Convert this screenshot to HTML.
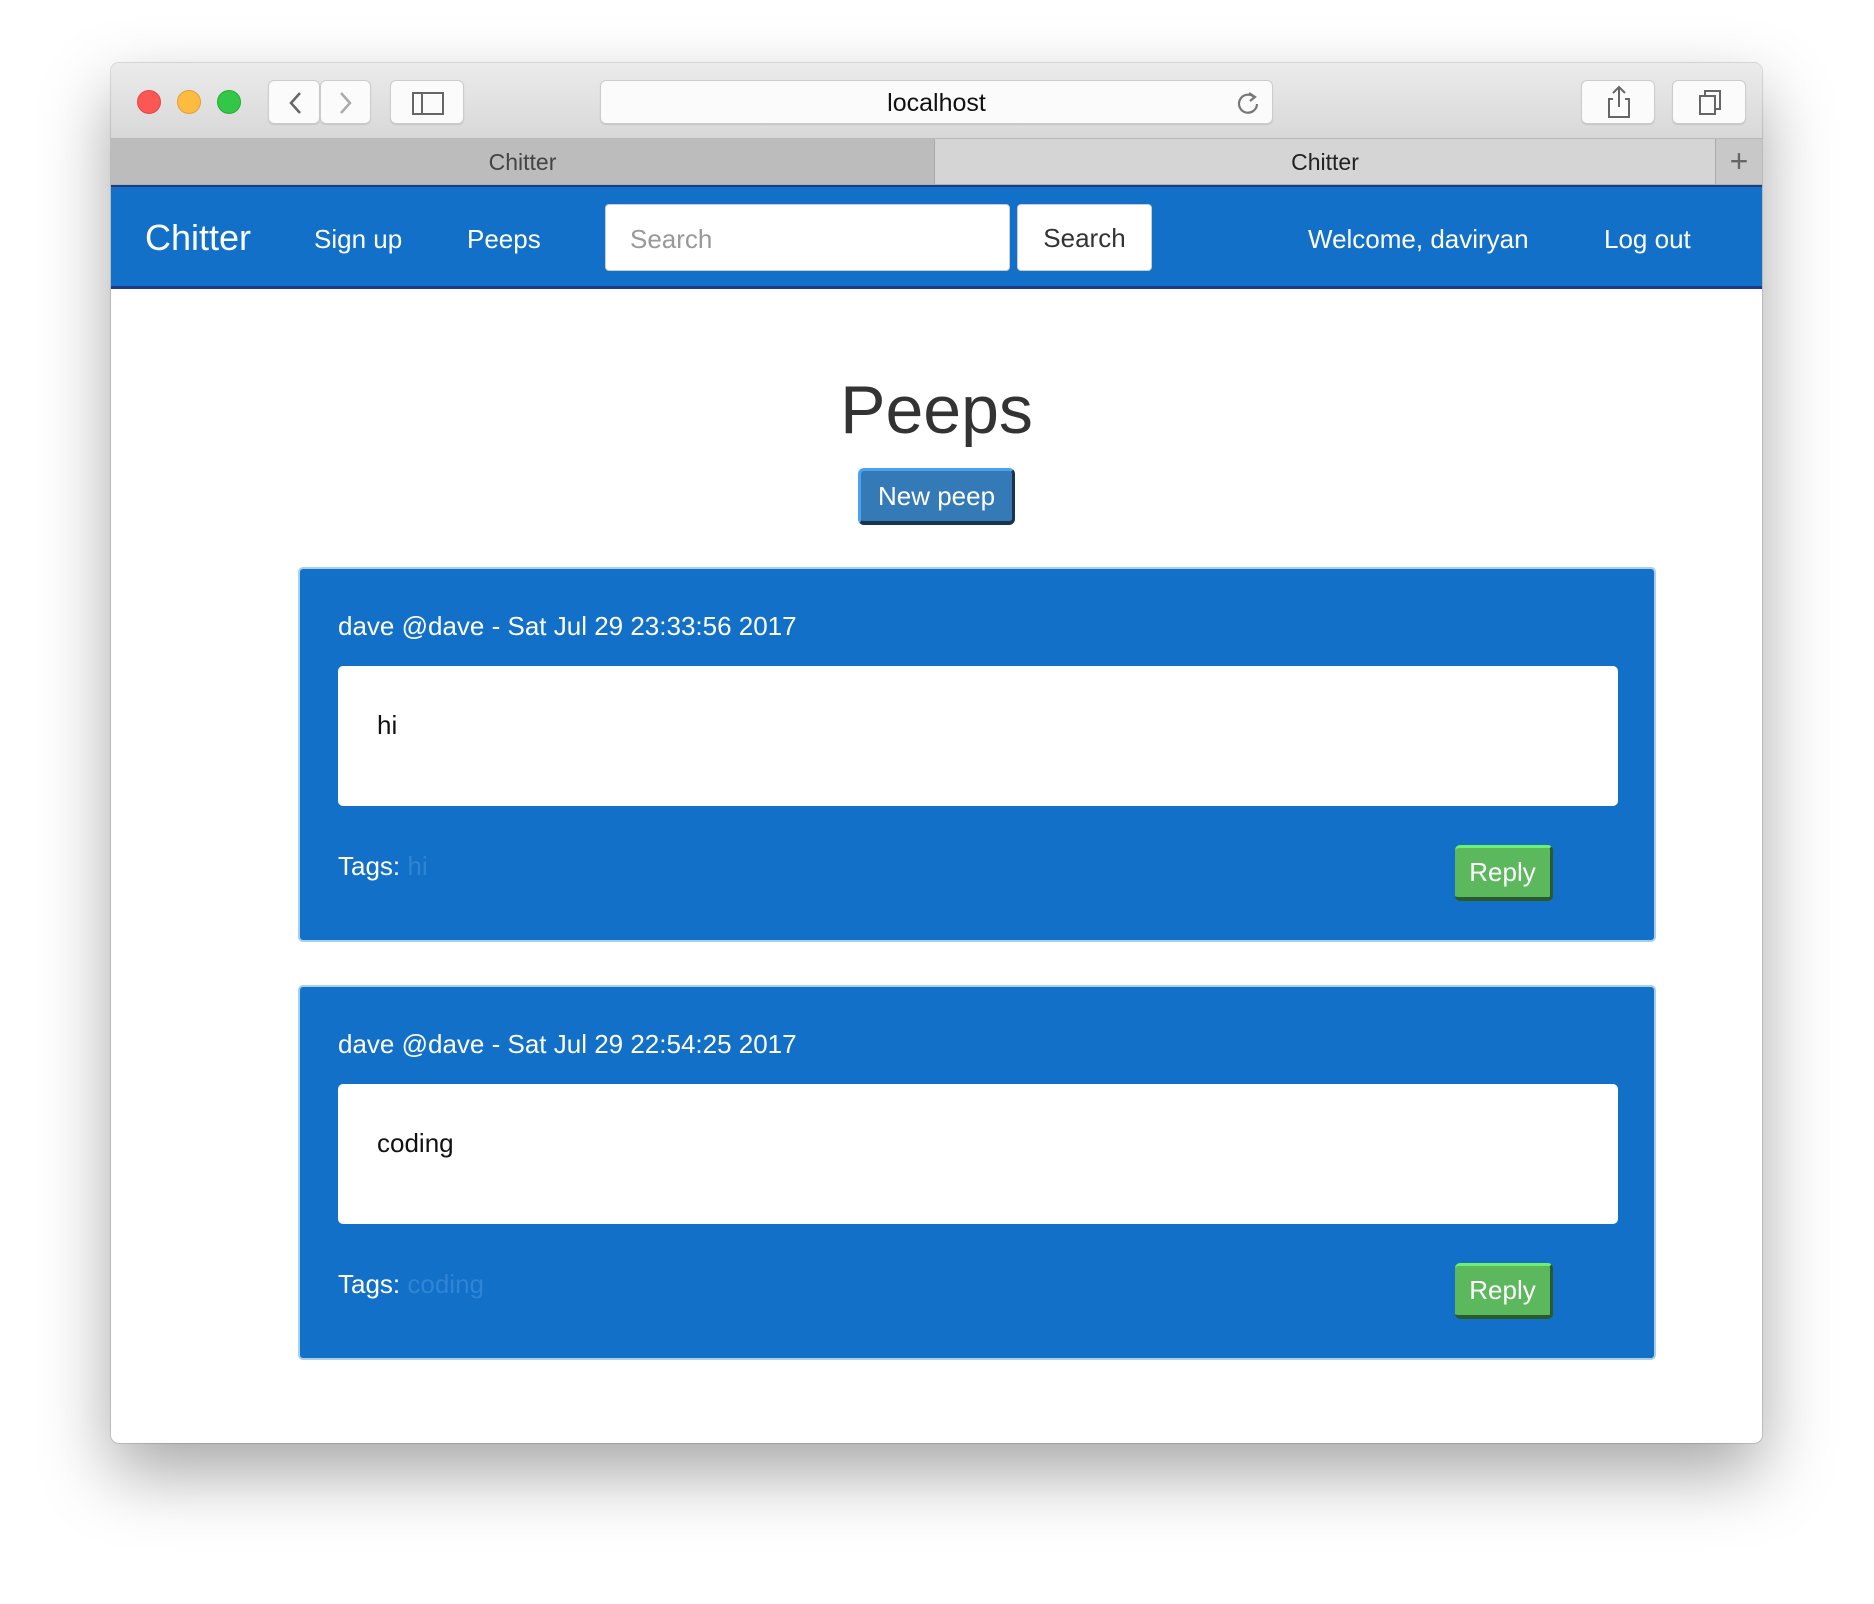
<!DOCTYPE html>
<html><head><style>
*{margin:0;padding:0;box-sizing:border-box}
body{width:1874px;height:1604px;background:#fff;font-family:"Liberation Sans",sans-serif;position:relative;overflow:hidden}
.win{position:absolute;left:111px;top:63px;width:1651px;height:1380px;background:#fff;border-radius:8px;box-shadow:0 30px 70px rgba(0,0,0,.35),0 0 0 1px rgba(0,0,0,.12);overflow:hidden}
.tb{position:absolute;left:0;top:0;width:100%;height:76px;background:linear-gradient(#ecebec,#d9d8d9);border-bottom:1px solid #b8b8b8}
.dot{position:absolute;top:27px;width:24px;height:24px;border-radius:50%}
.btn{position:absolute;top:17px;height:44px;background:#fbfbfb;border:1px solid #ccc;border-radius:6px;box-shadow:0 1px 1px rgba(0,0,0,.1)}
.tabs{position:absolute;left:0;top:76px;width:100%;height:46px;background:#d6d5d6;border-bottom:1px solid #b0b0b0}
.nav{position:absolute;left:0;top:122px;width:100%;height:104px;background:#1270c8;border-top:2px solid #1d3a8a;border-bottom:3px solid #1d3a8a;color:#fff;font-size:26px}
.nav span{position:absolute;top:37px}
.card{position:absolute;left:187px;width:1358px;height:375px;background:#1270c8;border:2px solid #a8d0e8;border-radius:5px;color:#fff;font-size:26px}
.card .h{position:absolute;left:38px;top:42px}
.card .box{position:absolute;left:38px;top:97px;width:1280px;height:140px;background:#fff;border-radius:5px;color:#111;padding:44px 0 0 39px}
.card .t{position:absolute;left:38px;top:282px}
.card .r{position:absolute;left:1155px;top:276px;width:98px;height:56px;background:#5cb85c;border-radius:5px;border-top:3px solid #6ef06e;border-bottom:4px solid #2a5a2a;border-right:3px solid #2a5a2a;text-align:center;line-height:48px}
</style></head><body>
<div class="win">
 <div class="tb">
  <div class="dot" style="left:26px;background:#fc5753;border:1px solid #df4744"></div>
  <div class="dot" style="left:66px;background:#fdbc40;border:1px solid #de9f34"></div>
  <div class="dot" style="left:106px;background:#33c748;border:1px solid #27aa35"></div>
  <div class="btn" style="left:157px;width:52px"><svg width="52" height="44"><path d="M31 12 L22 22 L31 32" fill="none" stroke="#666" stroke-width="2.5"/></svg></div>
  <div class="btn" style="left:209px;width:51px"><svg width="51" height="44"><path d="M20 12 L29 22 L20 32" fill="none" stroke="#aaa" stroke-width="2.5"/></svg></div>
  <div class="btn" style="left:279px;width:74px"><svg width="74" height="44"><rect x="22" y="12" width="30" height="21" fill="none" stroke="#666" stroke-width="2"/><line x1="31" y1="12" x2="31" y2="33" stroke="#666" stroke-width="2"/></svg></div>
  <div class="btn" style="left:489px;width:673px;text-align:center;font-size:25px;line-height:44px;color:#111">localhost<svg style="position:absolute;right:10px;top:8px" width="28" height="28"><path d="M20 8 A9 9 0 1 0 23 15" fill="none" stroke="#777" stroke-width="2.2"/><path d="M15 4 L21 8 L16 12" fill="none" stroke="#777" stroke-width="2.2"/></svg></div>
  <div class="btn" style="left:1470px;width:74px"><svg width="74" height="44"><path d="M31 18 H27 V36 H47 V18 H43 M37 26 V6 M31 12 L37 6 L43 12" fill="none" stroke="#666" stroke-width="2"/></svg></div>
  <div class="btn" style="left:1561px;width:74px"><svg width="74" height="44"><rect x="27" y="15" width="15" height="18" fill="none" stroke="#666" stroke-width="2"/><path d="M32 15 V10 H47 V28 H42" fill="none" stroke="#666" stroke-width="2"/></svg></div>
 </div>
 <div class="tabs">
  <div style="position:absolute;left:0;top:0;width:824px;height:45px;background:#bdbcbd;border-right:1px solid #a9a9a9;text-align:center;line-height:47px;font-size:23px;color:#444">Chitter</div>
  <div style="position:absolute;left:824px;top:0;width:780px;height:45px;text-align:center;line-height:47px;font-size:23px;color:#222">Chitter</div>
  <div style="position:absolute;left:1604px;top:0;width:47px;height:45px;border-left:1px solid #a9a9a9;background:#c9c8c9;text-align:center;line-height:44px;font-size:32px;color:#666">+</div>
 </div>
 <div class="nav">
  <span style="left:34px;top:30px;font-size:36px">Chitter</span>
  <span style="left:203px">Sign up</span>
  <span style="left:356px">Peeps</span>
  <div style="position:absolute;left:494px;top:17px;width:405px;height:67px;background:#fff;border:1px solid #ccc;border-radius:4px;color:#999;padding:19px 0 0 24px">Search</div>
  <div style="position:absolute;left:906px;top:17px;width:135px;height:67px;background:#fff;border:1px solid #ccc;border-radius:4px;color:#333;text-align:center;line-height:66px">Search</div>
  <span style="left:1197px">Welcome, daviryan</span>
  <span style="left:1493px">Log out</span>
 </div>
 <div style="position:absolute;left:0;top:308px;width:100%;text-align:center;font-size:68px;color:#333">Peeps</div>
 <div style="position:absolute;left:747px;top:405px;width:157px;height:57px;background:#337ab7;border-radius:6px;border-top:3px solid #4aa3ee;border-left:3px solid #4aa3ee;border-bottom:4px solid #1a3450;border-right:3px solid #1a3450;color:#fff;font-size:26px;text-align:center;line-height:50px">New peep</div>
 <div class="card" style="top:504px"><div class="h">dave @dave - Sat Jul 29 23:33:56 2017</div><div class="box">hi</div><div class="t">Tags: <span style="color:#2f85d4">hi</span></div><div class="r">Reply</div></div>
 <div class="card" style="top:922px"><div class="h">dave @dave - Sat Jul 29 22:54:25 2017</div><div class="box">coding</div><div class="t">Tags: <span style="color:#2f85d4">coding</span></div><div class="r">Reply</div></div>
</div>
</body></html>
